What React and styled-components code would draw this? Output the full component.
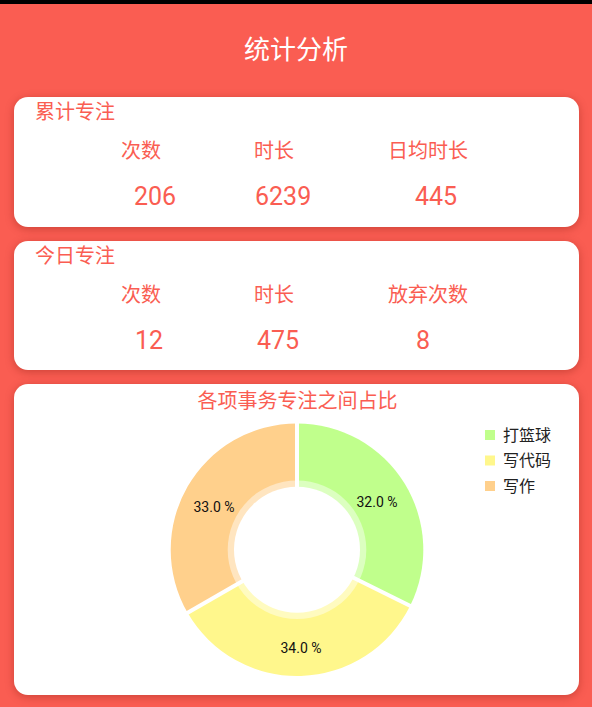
import React from "react";
import styled, { createGlobalStyle } from "styled-components";

const RED = "#FA5D52";

const GlobalStyle = createGlobalStyle`
  html, body { margin: 0; padding: 0; background: ${RED}; }
  body { font-family: Roboto, "Noto Sans CJK SC", sans-serif; }
  * { box-sizing: border-box; }
`;

const Page = styled.div`
  width: 592px;
  min-height: 707px;
  background: ${RED};
  display: flex;
  flex-direction: column;
`;

const StatusBar = styled.div`
  height: 4px;
  background: #000;
`;

const Header = styled.header`
  height: 93px;
  padding-top: 29px;
  display: flex;
  justify-content: center;
`;

const Title = styled.h1`
  margin: 0;
  font-size: 26px;
  line-height: 34px;
  font-weight: 400;
  color: #fff;
`;

const Cards = styled.main`
  display: flex;
  flex-direction: column;
  gap: 14px;
  padding: 0 13px 12px 14px;
`;

const Card = styled.section`
  background: #fff;
  border-radius: 14px;
  height: ${(p) => p.$h}px;
  box-shadow: 0 2px 8px rgba(120, 20, 10, 0.35);
  padding-top: ${(p) => p.$pt || 3}px;
  position: relative;
  overflow: hidden;
`;

const CardHeading = styled.h2`
  margin: 0;
  padding-left: 21px;
  font-size: 20px;
  line-height: 24px;
  font-weight: 400;
  color: ${RED};
`;

const StatGrid = styled.div`
  display: grid;
  grid-template-columns: 133px 134px auto;
  padding-left: 107px;
  margin-top: 15px;
`;

const Stat = styled.div`
  display: flex;
  flex-direction: column;
  gap: 19px;
`;

const StatLabel = styled.div`
  font-size: 20px;
  line-height: 24px;
  color: ${RED};
  white-space: nowrap;
`;

const StatValue = styled.div`
  font-size: 25px;
  line-height: 30px;
  color: ${RED};
  padding-left: ${(p) => p.$indent}px;
`;

const ChartTitle = styled.h2`
  margin: 0;
  text-align: center;
  font-size: 20px;
  line-height: 24px;
  font-weight: 400;
  color: ${RED};
  padding-left: 2px;
`;

const ChartSvg = styled.svg`
  display: block;
  font-family: Roboto, "Noto Sans CJK SC", sans-serif;
`;

const StatCard = ({ title, stats, height }) => (
  <Card $h={height}>
    <CardHeading>{title}</CardHeading>
    <StatGrid>
      {stats.map((s) => (
        <Stat key={s.label}>
          <StatLabel>{s.label}</StatLabel>
          <StatValue $indent={s.indent}>{s.value}</StatValue>
        </Stat>
      ))}
    </StatGrid>
  </Card>
);

const slices = [
  { name: "打篮球", value: 32, color: "rgb(192,255,140)", label: "32.0 %", lx: 363, ly: 89 },
  { name: "写代码", value: 34, color: "rgb(255,247,140)", label: "34.0 %", lx: 287, ly: 235 },
  { name: "写作", value: 33, color: "rgb(255,208,140)", label: "33.0 %", lx: 200, ly: 94 },
];

const CX = 283;
const CY = 136.7;
const R = 126.3;

const pt = (deg, r) => {
  const a = (deg * Math.PI) / 180;
  return [CX + r * Math.cos(a), CY + r * Math.sin(a)];
};

const Donut = () => {
  const total = slices.reduce((s, d) => s + d.value, 0);
  let start = -90;
  const arcs = slices.map((d) => {
    const sweep = (d.value / total) * 360;
    const end = start + sweep;
    const [x1, y1] = pt(start, R);
    const [x2, y2] = pt(end, R);
    const large = sweep > 180 ? 1 : 0;
    const path = `M${CX},${CY} L${x1},${y1} A${R},${R} 0 ${large} 1 ${x2},${y2} Z`;
    const res = { ...d, path, start };
    start = end;
    return res;
  });
  return (
    <ChartSvg width="565" height="282" viewBox="0 0 565 282">
      {arcs.map((a) => (
        <path key={a.name} d={a.path} fill={a.color} />
      ))}
      {arcs.map((a) => {
        const [x, y] = pt(a.start, R + 2);
        return <line key={a.name + "s"} x1={CX} y1={CY} x2={x} y2={y} stroke="#fff" strokeWidth="4" />;
      })}
      <circle cx={CX} cy={CY} r={69.3} fill="#fff" fillOpacity="0.45" />
      <circle cx={CX} cy={CY} r={63} fill="#fff" />
      {arcs.map((a) => (
        <text key={a.name + "t"} x={a.lx} y={a.ly} fontSize="14" fill="#111" textAnchor="middle" dominantBaseline="central">
          {a.label}
        </text>
      ))}
      {slices.map((d, i) => (
        <g key={d.name + "l"}>
          <rect x="471" y={17 + i * 25.5} width="10" height="10" fill={d.color} />
          <text x="489" y={22 + i * 25.5} fontSize="16" fill="#222" dominantBaseline="central">
            {d.name}
          </text>
        </g>
      ))}
    </ChartSvg>
  );
};

export default function App() {
  return (
    <>
      <GlobalStyle />
      <Page>
        <StatusBar />
        <Header>
          <Title>统计分析</Title>
        </Header>
        <Cards>
          <StatCard
            title="累计专注"
            height={130}
            stats={[
              { label: "次数", value: "206", indent: 13 },
              { label: "时长", value: "6239", indent: 1 },
              { label: "日均时长", value: "445", indent: 27 },
            ]}
          />
          <StatCard
            title="今日专注"
            height={129}
            stats={[
              { label: "次数", value: "12", indent: 14 },
              { label: "时长", value: "475", indent: 3 },
              { label: "放弃次数", value: "8", indent: 28 },
            ]}
          />
          <Card $h={311} $pt={5}>
            <ChartTitle>各项事务专注之间占比</ChartTitle>
            <Donut />
          </Card>
        </Cards>
      </Page>
    </>
  );
}
